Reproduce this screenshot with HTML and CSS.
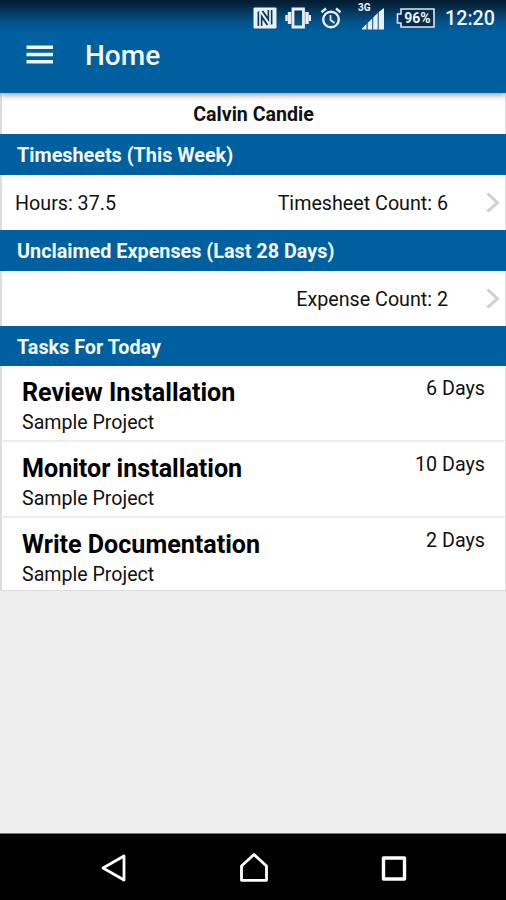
FILE: index.html
```html
<!DOCTYPE html>
<html lang="en">
<head>
<meta charset="utf-8">
<title>Home</title>
<link rel="stylesheet" href="styles.css">
</head>
<body>
<div class="app">
  <header class="top">
    <div class="status">
      <svg class="nfc" width="24" height="22" viewBox="0 0 24 22"><rect x=".5" y=".5" width="23" height="21" rx="1" fill="#e9eff4"/><path d="M5.500 19V4.500M8.500 19V9.500l6 8.500M18.500 3v14.500M15.500 3v9.500L9.500 4" fill="none" stroke="#06395f" stroke-width="1.900"/><path d="M7 5v14M17 3v14" stroke="#e9eff4" stroke-width="1.300"/></svg>
      <svg class="vibrate" width="26" height="22" viewBox="0 0 26 22"><path d="M8 2h10.500v18H8z" fill="none" stroke="#e9eff4" stroke-width="2.800"/><path d="M4.500 5v12M22 5v12" stroke="#e9eff4" stroke-width="3.400"/><path d="M1.500 8v6M24.800 8v6" stroke="#e9eff4" stroke-width="2.400"/></svg>
      <svg class="alarm" width="22" height="22" viewBox="0 0 22 22" fill="none" stroke="#e9eff4"><circle cx="11" cy="12.500" r="7.800" stroke-width="2.400"/><path d="M10.500 8v5l4 3" stroke-width="1.700"/><path d="M1.500 5.200L6 1.500M16 1.500l4.500 3.700" stroke-width="2.400"/></svg>
      <div class="signal"><span>3G</span><svg width="23" height="22" viewBox="0 0 23 22" fill="#e9eff4"><path d="M0 21.500v-1l4.500-4.500v5.500zM5.700 21.500V15l4.500-4.500v11zM11.200 21.500v-12l4.500-4.500v16.500zM16.700 21.500V4L22 0v21.500z"/></svg></div>
      <div class="battery"><svg width="39" height="20" viewBox="0 0 39 20"><path d="M5 1h33v18H5v-4H1.500V6H5z" fill="#092c4c" stroke="#dce6ee" stroke-width="1.600"/></svg><span>96%</span></div>
      <time>12:20</time>
    </div>
    <div class="bar">
      <svg class="menu" width="28" height="20" viewBox="0 0 28 20"><path d="M.5 2.200h26.500M.5 9.500h26.500M.5 16.800h26.500" stroke="#eef5fb" stroke-width="3.400"/></svg>
      <h1>Home</h1>
    </div>
  </header>
  <main>
    <div class="user">Calvin Candie</div>
    <h2>Timesheets (This Week)</h2>
    <div class="row"><span class="hours">Hours: 37.5</span><span class="count">Timesheet Count: 6</span><svg class="chev" width="14" height="22" viewBox="0 0 14 22"><path d="M1.500 1.500L11.500 10.800 1.500 19.500" fill="none" stroke="#d0d0d0" stroke-width="3"/></svg></div>
    <h2>Unclaimed Expenses (Last 28 Days)</h2>
    <div class="row"><span class="count">Expense Count: 2</span><svg class="chev" width="14" height="22" viewBox="0 0 14 22"><path d="M1.500 1.500L11.500 10.800 1.500 19.500" fill="none" stroke="#d0d0d0" stroke-width="3"/></svg></div>
    <h2>Tasks For Today</h2>
    <ul>
      <li><div><h3>Review Installation</h3><p>Sample Project</p></div><span class="days">6 Days</span></li>
      <li><div><h3>Monitor installation</h3><p>Sample Project</p></div><span class="days">10 Days</span></li>
      <li><div><h3>Write Documentation</h3><p>Sample Project</p></div><span class="days">2 Days</span></li>
    </ul>
  </main>
  <nav>
    <svg width="28" height="32" viewBox="0 0 28 32"><path d="M24 4v24L3 16z" fill="none" stroke="#fff" stroke-width="2.800" stroke-linejoin="round"/></svg>
    <svg width="30" height="32" viewBox="0 0 30 32"><path d="M2.500 14L15 2.500 27.500 14v14.300h-25z" fill="none" stroke="#fff" stroke-width="2.800" stroke-linejoin="round"/></svg>
    <svg width="26" height="32" viewBox="0 0 26 32"><rect x="2.500" y="6" width="21" height="21" fill="none" stroke="#fff" stroke-width="3.400" stroke-linejoin="round"/></svg>
  </nav>
</div>
</body>
</html>
```
FILE: styles.css
```css
* { box-sizing: border-box; }
body, h1, h2, h3, p, ul { margin: 0; padding: 0; }
body { font-family: Roboto, "Liberation Sans", sans-serif; color: #111; }
.app { width: 506px; height: 900px; display: flex; flex-direction: column; background: #eee; overflow: hidden; }
svg { display: block; flex: none; }
.top { height: 93px; flex: none; background: linear-gradient(#031b30 0, #04223b 4px, #053c64 13px, #04528a 22px, #00609f 34px); box-shadow: 0 1px 7px rgba(0,0,0,.5); position: relative; z-index: 1; }
.status { height: 35px; display: flex; align-items: center; padding-left: 253px; color: #eef5fa; }
.vibrate { margin-left: 8px; }
.alarm { margin-left: 9px; }
.signal { position: relative; margin-left: 20px; }
.signal span { position: absolute; left: -4px; top: -3px; font: bold 10px/10px Roboto, sans-serif; }
.signal svg { margin-top: 2px; }
.battery { position: relative; margin-left: 11px; }
.battery span { position: absolute; left: 6px; top: 0; width: 31px; text-align: center; font-size: 14px; line-height: 20px; font-weight: 700; }
.status time { margin-left: 10px; font-size: 19.7px; line-height: 24px; font-weight: 500; padding-top: 3px; white-space: nowrap; }
.bar { height: 41px; display: flex; align-items: center; padding-left: 26px; }
.menu { margin-top: -2px; }
h1 { margin-left: 31px; font-size: 28px; line-height: 40px; font-weight: 500; color: #f4f8fc; }
main { flex: 1; }
.user { height: 41px; background: #fff; border-left: 2px solid #ddd; border-right: 1px solid #ddd; text-align: center; font-size: 19.6px; line-height: 43px; font-weight: 700; }
h2 { height: 41px; background: #00609f; color: #f4f8fc; font-size: 19.8px; line-height: 43px; font-weight: 700; padding-left: 17px; white-space: nowrap; }
.row { height: 55px; background: #fff; border-left: 2px solid #ddd; border-right: 1px solid #ddd; display: flex; align-items: center; padding: 1px 5px 0 13px; font-size: 19.7px; }
.count { margin-left: auto; }
.chev { margin: -1px 0 0 38px; }
ul { list-style: none; margin-top: -1px; }
li { height: 76px; background: #fff; border-left: 2px solid #ddd; border-right: 1px solid #ddd; border-bottom: 2px solid #eee; display: flex; justify-content: space-between; padding: 11px 20px 0; }
li:last-child { height: 73px; border-bottom: 1px solid #ddd; }
h3 { font-size: 25.100px; line-height: 32px; font-weight: 700; color: #000; }
p { font-size: 19.6px; line-height: 28px; }
.days { font-size: 19.7px; line-height: 24px; }
nav { height: 67px; flex: none; background: #000; border-top: 1px solid #777; display: flex; padding: 18px 0 0 100px; }
nav svg + svg { margin-left: 111px; }
nav svg + svg + svg { margin-left: 112px; }
```
